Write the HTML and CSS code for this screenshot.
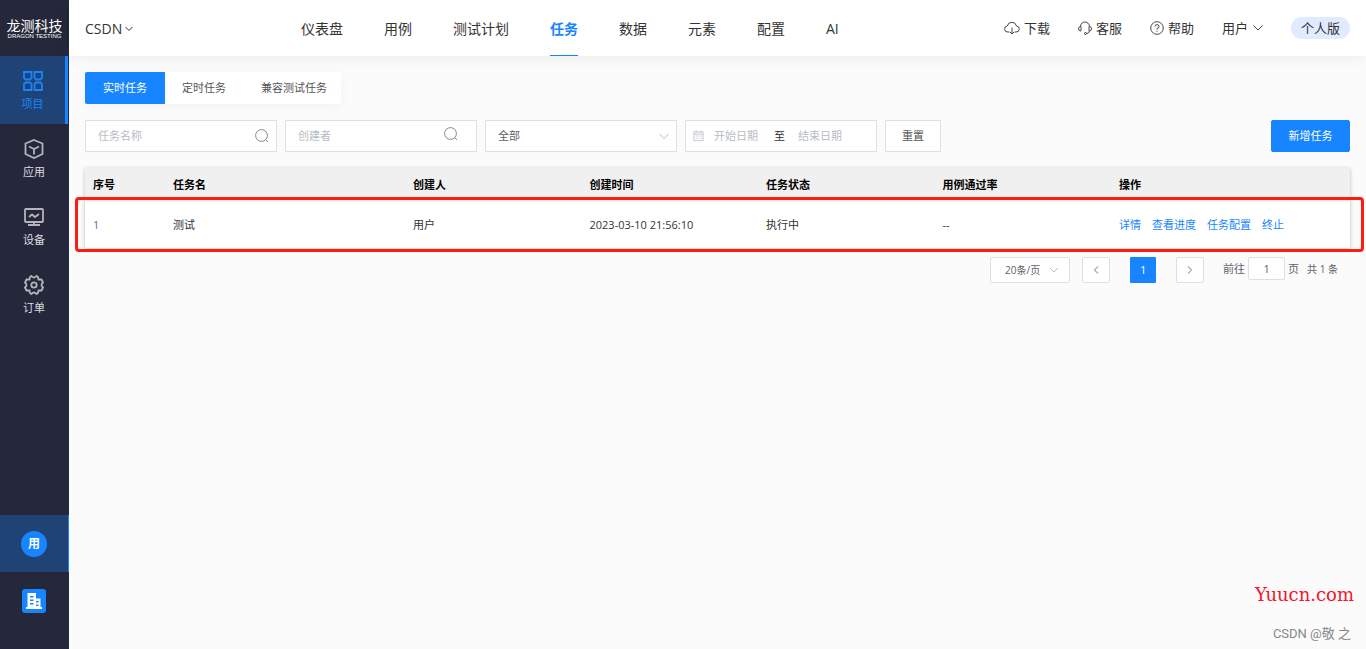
FILE: index.html
```html
<!DOCTYPE html>
<html lang="zh-CN">
<head>
<meta charset="utf-8">
<title>任务 - 龙测科技</title>
<link rel="stylesheet" href="styles.css">
</head>
<body>
<div class="app">
  <aside class="sidebar">
    <div class="logo">
      <span class="logo-name">龙测科技</span>
      <span class="logo-sub">DRAGON TESTING</span>
    </div>
    <nav class="side-nav">
      <a class="side-item active" href="#">
        <svg class="side-icon" viewBox="0 0 20 20"><path d="M1 1H8.500V7L7 8.500H2.500L1 7ZM11.500 1H19V7L17.500 8.500H13L11.500 7ZM2.500 11.500H7L8.500 13V19H1V13ZM13 11.500H17.500L19 13V19H11.500V13Z"/></svg>
        <span>项目</span>
      </a>
      <a class="side-item" href="#">
        <svg class="side-icon" viewBox="0 0 20 20"><path d="M10 1 18.500 4.500V15L10 19 1.500 15V4.500Z"/><path d="M5 7.500 10 10 15 7.500M10 10V15.500"/></svg>
        <span>应用</span>
      </a>
      <a class="side-item" href="#">
        <svg class="side-icon" viewBox="0 0 20 20"><path d="M2 2H18Q19 2 19 3V14Q19 15 18 15H2Q1 15 1 14V3Q1 2 2 2ZM4 18H16M10 15V18M5 10 8 7.500 11 10 15 7"/></svg>
        <span>设备</span>
      </a>
      <a class="side-item" href="#">
        <svg class="side-icon" viewBox="0 0 20 20"><path d="M7.500 1Q10 4 12.500 1L14 2L14.500 4.500L17.500 4.500L19 7.500Q16 10 19 12.500L17.500 15.500L14.500 15.500L14 18L12.500 19Q10 16 7.500 19L6 18L5.500 15.500L2.500 15.500L1 12.500Q4 10 1 7.500L2.500 4.500L5.500 4.500L6 2Z"/><circle cx="10" cy="10" r="2.700"/></svg>
        <span>订单</span>
      </a>
    </nav>
    <div class="side-foot">
      <button class="foot-item active" type="button"><span class="avatar">用</span></button>
      <button class="foot-item" type="button" aria-label="企业">
        <svg class="company" viewBox="0 0 24 24"><rect width="24" height="24" rx="3" fill="#1785ff"/><path fill="#fff" fill-rule="evenodd" d="M5.500 4H14V9.500H18.500V18H20V20H4V18H5.500ZM8 7V8.500H11.500V7ZM8 10.500V12H11.500V10.500ZM8 14V15.500H11.500V14ZM14 12V13.500H16.500V12ZM14 15.500V17H16.500V15.500Z"/></svg>
      </button>
    </div>
  </aside>

  <div class="page">
    <header class="topbar">
      <button class="project" type="button">CSDN
        <svg class="caret" viewBox="0 0 8 8"><path d="M0.500 2 4 5.500 7.500 2"/></svg>
      </button>
      <nav class="main-nav">
        <a href="#">仪表盘</a>
        <a href="#">用例</a>
        <a href="#">测试计划</a>
        <a class="active" href="#">任务</a>
        <a href="#">数据</a>
        <a href="#">元素</a>
        <a href="#">配置</a>
        <a href="#">AI</a>
      </nav>
      <div class="tools">
        <a href="#"><svg class="tool-icon" viewBox="0 0 16 14"><path d="M5.500 11H4A3 3 0 0 1 3.300 5 4.700 4.700 0 0 1 12.500 5 3 3 0 0 1 12 11H10.500M8 6.500V13M6 11 8 13 10 11"/></svg>下载</a>
        <a href="#"><svg class="tool-icon small" viewBox="0 0 14 14"><path d="M2.500 5.500A4.500 4.500 0 0 1 11.500 5.500M3 5.500V10H2.500L0.700 9V6.500L2.500 5.500ZM11 5.500V10H11.500L13.300 9V6.500L11.500 5.500ZM11.500 10Q11 12.500 8.500 12.500"/><circle cx="7.500" cy="12.500" r="1"/></svg>客服</a>
        <a href="#"><svg class="tool-icon small" viewBox="0 0 14 14"><circle cx="7" cy="7" r="6.300"/><path d="M5 5.500A2 1.900 0 1 1 7 7.400V8.500M7 9.700V10.800"/></svg>帮助</a>
        <button class="user" type="button">用户<svg class="user-caret" viewBox="0 0 10 10"><path d="M0.500 2.500 5 7 9.500 2.500"/></svg></button>
        <span class="plan">个人版</span>
      </div>
    </header>

    <main class="content">
      <div class="tabs">
        <button class="tab active" type="button">实时任务</button>
        <button class="tab" type="button">定时任务</button>
        <button class="tab" type="button">兼容测试任务</button>
      </div>

      <form class="filters">
        <label class="field">
          <input type="text" placeholder="任务名称" aria-label="任务名称">
          <svg class="search" viewBox="0 0 14 14"><circle cx="6.500" cy="6.500" r="5.900"/><path d="M10.700 10.700 13 13"/></svg>
        </label>
        <label class="field creator">
          <input type="text" placeholder="创建者" aria-label="创建者">
          <svg class="search" viewBox="0 0 14 14"><circle cx="6.500" cy="6.500" r="5.900"/><path d="M10.700 10.700 13 13"/></svg>
        </label>
        <label class="field">
          <select aria-label="任务状态"><option>全部</option></select>
          <svg class="arrow" viewBox="0 0 10 10"><path d="M0.500 3 5 7.500 9.500 3"/></svg>
        </label>
        <div class="field dates">
          <svg class="calendar" viewBox="0 0 12 12"><path d="M1 1.500H11V11H1ZM1 4H11M3.500 0V2.500M8.500 0V2.500M3 6H4.500M5.500 6H7M8 6H9.500M3 8.500H4.500M5.500 8.500H7M8 8.500H9.500"/></svg>
          <input type="text" placeholder="开始日期" aria-label="开始日期">
          <span class="to">至</span>
          <input type="text" placeholder="结束日期" aria-label="结束日期">
        </div>
        <button class="btn" type="reset">重置</button>
        <button class="btn primary" type="button">新增任务</button>
      </form>

      <div class="table-wrap">
        <table class="tasks">
          <colgroup><col class="col-no"><col class="col-name"><col><col><col><col><col class="col-ops"></colgroup>
          <thead>
            <tr><th>序号</th><th>任务名</th><th>创建人</th><th>创建时间</th><th>任务状态</th><th>用例通过率</th><th>操作</th></tr>
          </thead>
          <tbody>
            <tr>
              <td class="no">1</td><td>测试</td><td>用户</td><td>2023-03-10 21:56:10</td><td>执行中</td><td>--</td>
              <td><div class="ops"><a href="#">详情</a><a href="#">查看进度</a><a href="#">任务配置</a><a href="#">终止</a></div></td>
            </tr>
          </tbody>
        </table>
        <div class="highlight"></div>
      </div>

      <div class="pager">
        <label class="page-size">
          <select aria-label="每页条数"><option>20条/页</option></select>
          <svg class="arrow" viewBox="0 0 10 10"><path d="M1 3 5 7 9 3"/></svg>
        </label>
        <button class="step" type="button" aria-label="上一页"><svg viewBox="0 0 10 10"><path d="M7 1.500 3.500 5 7 8.500"/></svg></button>
        <button class="current" type="button">1</button>
        <button class="step" type="button" aria-label="下一页"><svg viewBox="0 0 10 10"><path d="M3 1.500 6.500 5 3 8.500"/></svg></button>
        <label class="jump">前往<input type="text" value="1">页</label>
        <span class="total">共 1 条</span>
      </div>
    </main>
  </div>
  <div class="site-mark">Yuucn.com</div>
  <div class="author-mark">CSDN @敬 之</div>
</div>
</body>
</html>
```
FILE: styles.css
```css
* { box-sizing: border-box; }

body {
  margin: 0;
  background: #fbfbfb;
  color: #333;
  font: 11px/16px "Open Sans", "Noto Sans CJK SC", sans-serif;
}

a { color: inherit; text-decoration: none; }
button, input, select { font: inherit; color: inherit; margin: 0; }
button { padding: 0; border: 0; background: none; cursor: pointer; }
svg { display: block; flex: none; fill: none; stroke: currentColor; }

.app { position: relative; display: flex; min-height: 100vh; }

.sidebar {
  display: flex;
  flex-direction: column;
  flex: none;
  width: 69px;
  background: #25273a;
  color: #dcdce0;
}
.logo {
  display: flex;
  flex-direction: column;
  align-items: center;
  height: 56px;
  padding-top: 19px;
  color: #fff;
  white-space: nowrap;
}
.logo-name { font-size: 14px; line-height: 14px; }
.logo-sub { font: 6px/6px "Liberation Sans", sans-serif; }

.side-item {
  display: flex;
  flex-direction: column;
  align-items: center;
  gap: 5px;
  height: 68px;
  margin-right: 1px;
  padding-top: 15px;
}
.side-item.active {
  border-right: 3px solid #1785ff;
  background: #204375;
  color: #1785ff;
}
.side-icon { width: 20px; height: 20px; stroke-width: 1.8; color: #b4b4ba; }
.active .side-icon { color: #1785ff; }

.side-foot { margin-top: auto; padding-bottom: 20px; }
.foot-item {
  display: flex;
  align-items: center;
  justify-content: center;
  width: 100%;
  height: 57px;
  border-right: 1px solid transparent;
}
.foot-item.active { background: #204375; border-right-color: #1785ff; }
.avatar {
  width: 26px;
  height: 26px;
  border-radius: 50%;
  background: #1785ff;
  color: #fff;
  font-weight: bold;
  font-size: 12px;
  line-height: 26px;
}
.company { width: 24px; height: 24px; stroke: none; }

.page { flex: 1; min-width: 0; }

.topbar {
  display: flex;
  align-items: center;
  height: 56px;
  padding: 0 16px;
  background: #fff;
  box-shadow: 0 2px 12px rgba(0, 0, 0, 0.06);
}
.project {
  display: flex;
  align-items: center;
  gap: 3px;
  width: 216px;
  padding-top: 1px;
  font-size: 14px;
}
.caret { width: 8px; height: 8px; }
.main-nav { display: flex; gap: 41px; font-size: 14px; }
.main-nav a { height: 56px; line-height: 58px; }
.main-nav .active {
  color: #1785ff;
  font-weight: bold;
  border-bottom: 1px solid #1785ff;
}
.tools {
  display: flex;
  align-items: center;
  gap: 28px;
  margin-left: auto;
  font-size: 13px;
}
.tools a { display: flex; align-items: center; gap: 4px; }
.tool-icon { width: 16px; height: 14px; stroke-width: 0.9; }
.tool-icon.small { width: 14px; }
.user { display: flex; align-items: center; gap: 5px; }
.user-caret { width: 10px; height: 10px; stroke-width: 0.9; }
.plan {
  padding: 0 10px;
  border-radius: 11px;
  background: #e0ebff;
  line-height: 22px;
}

.content { padding: 16px; }

.tabs {
  display: flex;
  width: max-content;
  border-radius: 2px;
  background: #fff;
  box-shadow: 0 2px 12px rgba(0, 0, 0, 0.04);
}
.tab { height: 32px; padding: 0 14px 0 18px; color: #555; }
.tab.active {
  padding: 0 18px;
  border-radius: 2px 0 0 2px;
  background: #1785ff;
  color: #fff;
}
.tab:nth-child(2) { padding: 0 17px; }

.filters { display: flex; gap: 8px; margin-top: 16px; }
.field {
  display: flex;
  align-items: center;
  width: 192px;
  height: 32px;
  padding: 0 7px 0 12px;
  border: 1px solid #dcdfe6;
  border-radius: 1px;
  background: #fff;
  color: #606266;
}
.creator { padding-right: 18px; }
.creator .search { margin-bottom: 4px; }
.field input, .field select {
  flex: 1;
  min-width: 0;
  padding: 0;
  border: 0;
  outline: 0;
  background: none;
  appearance: none;
}
input::placeholder { color: #b8bcc5; opacity: 1; }
.search { width: 14px; height: 14px; color: #888; }
.arrow { width: 10px; height: 10px; color: #b8bcc5; }
.dates { padding: 0 7px; }
.dates input { flex: none; width: 60px; }
.calendar { width: 11px; height: 12px; margin-right: 10px; color: #c0c4cc; }
.to { width: 24px; color: #303133; }
.btn {
  width: 56px;
  height: 32px;
  border: 1px solid #dcdfe6;
  border-radius: 1px;
  background: #fff;
  color: #555;
}
.btn.primary {
  width: 79px;
  margin-left: auto;
  border-color: #1785ff;
  border-radius: 2px;
  background: #1785ff;
  color: #fff;
}

.table-wrap { position: relative; margin-top: 16px; }
.tasks {
  width: 100%;
  table-layout: fixed;
  border-collapse: collapse;
  background: #fff;
  box-shadow: 0 1px 4px rgba(0, 0, 0, 0.25);
}
.col-no { width: 80px; }
.col-name { width: 240px; }
.col-ops { width: 239px; }
.tasks th, .tasks td { padding: 0 8px; text-align: left; }
.tasks th { height: 34px; background: #f0f0f0; color: #000; font-weight: bold; }
.tasks td { height: 46px; }
.tasks .no { color: #5a7299; }
.ops { display: flex; gap: 11px; color: #1785ff; }
.highlight {
  position: absolute;
  inset: 29px -14px -4px -10px;
  border: 3px solid #fe1c10;
  border-radius: 4px;
  pointer-events: none;
}

.pager {
  display: flex;
  justify-content: flex-end;
  margin-top: 9px;
  padding-right: 12px;
  color: #606266;
}
.page-size {
  display: flex;
  align-items: center;
  width: 80px;
  height: 26px;
  padding: 0 10px 0 14px;
  border: 1px solid #dcdfe6;
  border-radius: 2px;
  background: #fff;
}
.page-size select {
  flex: 1;
  min-width: 0;
  padding: 0;
  border: 0;
  background: none;
  appearance: none;
  font-size: 10px;
}
.step {
  display: flex;
  align-items: center;
  justify-content: center;
  width: 28px;
  height: 26px;
  margin-left: 12px;
  border: 1px solid #dcdfe6;
  border-radius: 2px;
  background: #fff;
  color: #b0b4bc;
}
.step svg { width: 10px; height: 10px; stroke-width: 1.4; }
.current {
  width: 26px;
  height: 26px;
  margin: 0 8px 0 20px;
  border-radius: 1px;
  background: #1785ff;
  color: #fff;
}
.jump { display: flex; align-items: center; gap: 3px; height: 23px; margin-left: 19px; }
.jump input {
  width: 37px;
  height: 23px;
  padding: 0;
  border: 1px solid #dcdfe6;
  border-radius: 2px;
  background: #fff;
  text-align: center;
}
.total { margin-left: 8px; font-size: 10px; line-height: 24px; }

.site-mark {
  position: absolute;
  right: 12px;
  bottom: 44px;
  color: #f5142b;
  font: 18px/20px "DejaVu Serif", serif;
}
.author-mark {
  position: absolute;
  right: 15px;
  bottom: 7px;
  color: #888;
  font: 13px/16px "Roboto", "Noto Sans CJK SC", sans-serif;
}
```
